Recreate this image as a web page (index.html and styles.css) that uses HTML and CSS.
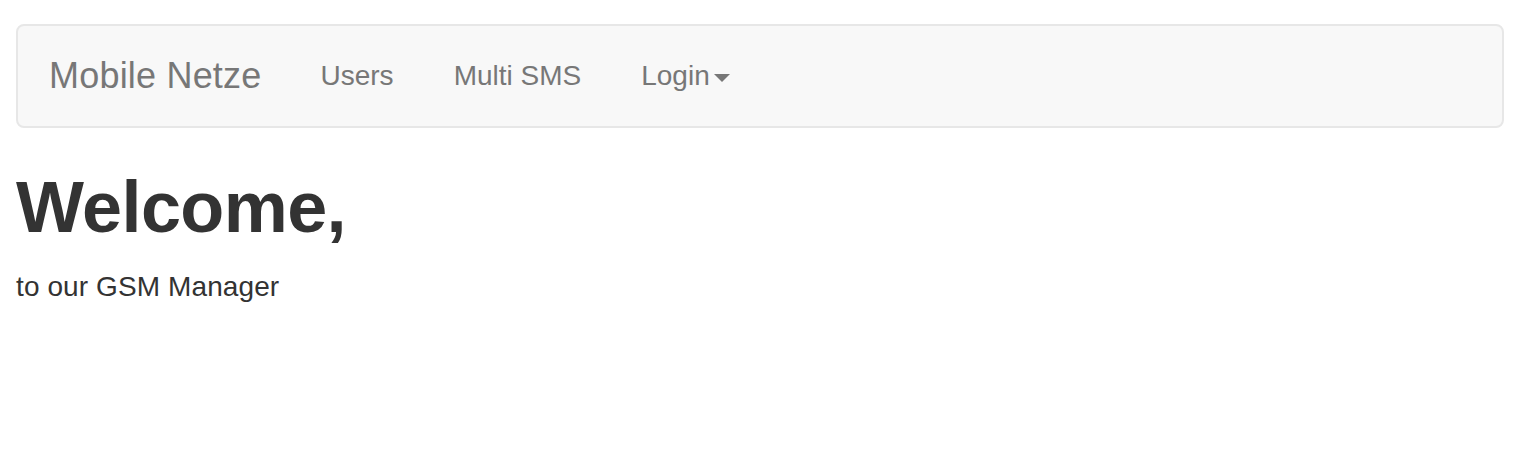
FILE: index.html
```html
<!DOCTYPE html>
<html>
<head>
<meta charset="utf-8">
<title>Mobile Netze</title>
<link rel="stylesheet" href="styles.css">
</head>
<body>
<div class="page">
  <nav class="navbar">
    <a class="brand" href="#">Mobile Netze</a>
    <ul class="nav">
      <li><a href="#">Users</a></li>
      <li><a href="#">Multi SMS</a></li>
      <li><a href="#">Login<span class="caret"></span></a></li>
    </ul>
  </nav>
  <main class="content">
    <h1 class="title">Welcome,</h1>
    <p class="lead">to our GSM Manager</p>
  </main>
</div>
</body>
</html>
```
FILE: styles.css
```css
html, body {
  margin: 0;
  padding: 0;
  background: #fff;
}
body {
  font-family: "Liberation Sans", Arial, Helvetica, sans-serif;
  color: #333;
  font-size: 28px;
  line-height: 40px;
}
.page {
  padding: 24px 20px 0 16px;
}
.navbar {
  display: flex;
  align-items: flex-start;
  min-height: 100px;
  background: #f8f8f8;
  border: 2px solid #e7e7e7;
  border-radius: 8px;
  padding: 0 30px;
  margin-bottom: 40px;
}
.brand {
  display: block;
  font-size: 36px;
  line-height: 40px;
  height: 40px;
  padding: 30px 29px 30px 31px;
  margin-left: -30px;
  letter-spacing: 0.2px;
  color: #777;
  text-decoration: none;
}
.nav {
  display: flex;
  list-style: none;
  margin: 0;
  padding: 0;
}
.nav a {
  display: block;
  padding: 30px 30px;
  line-height: 40px;
  font-size: 28px;
  color: #777;
  text-decoration: none;
}
.caret {
  display: inline-block;
  width: 0;
  height: 0;
  margin-left: 4px;
  vertical-align: middle;
  border-top: 8px solid #777;
  border-left: 8px solid transparent;
  border-right: 8px solid transparent;
}
.content {
  padding: 0;
}
.title {
  font-size: 72px;
  font-weight: 700;
  letter-spacing: -0.6px;
  line-height: 1.1;
  margin: 40px 0 20px;
  color: #333;
}
.lead {
  margin: 0 0 20px;
  font-size: 28px;
  line-height: 40px;
  letter-spacing: 0.1px;
}
```
